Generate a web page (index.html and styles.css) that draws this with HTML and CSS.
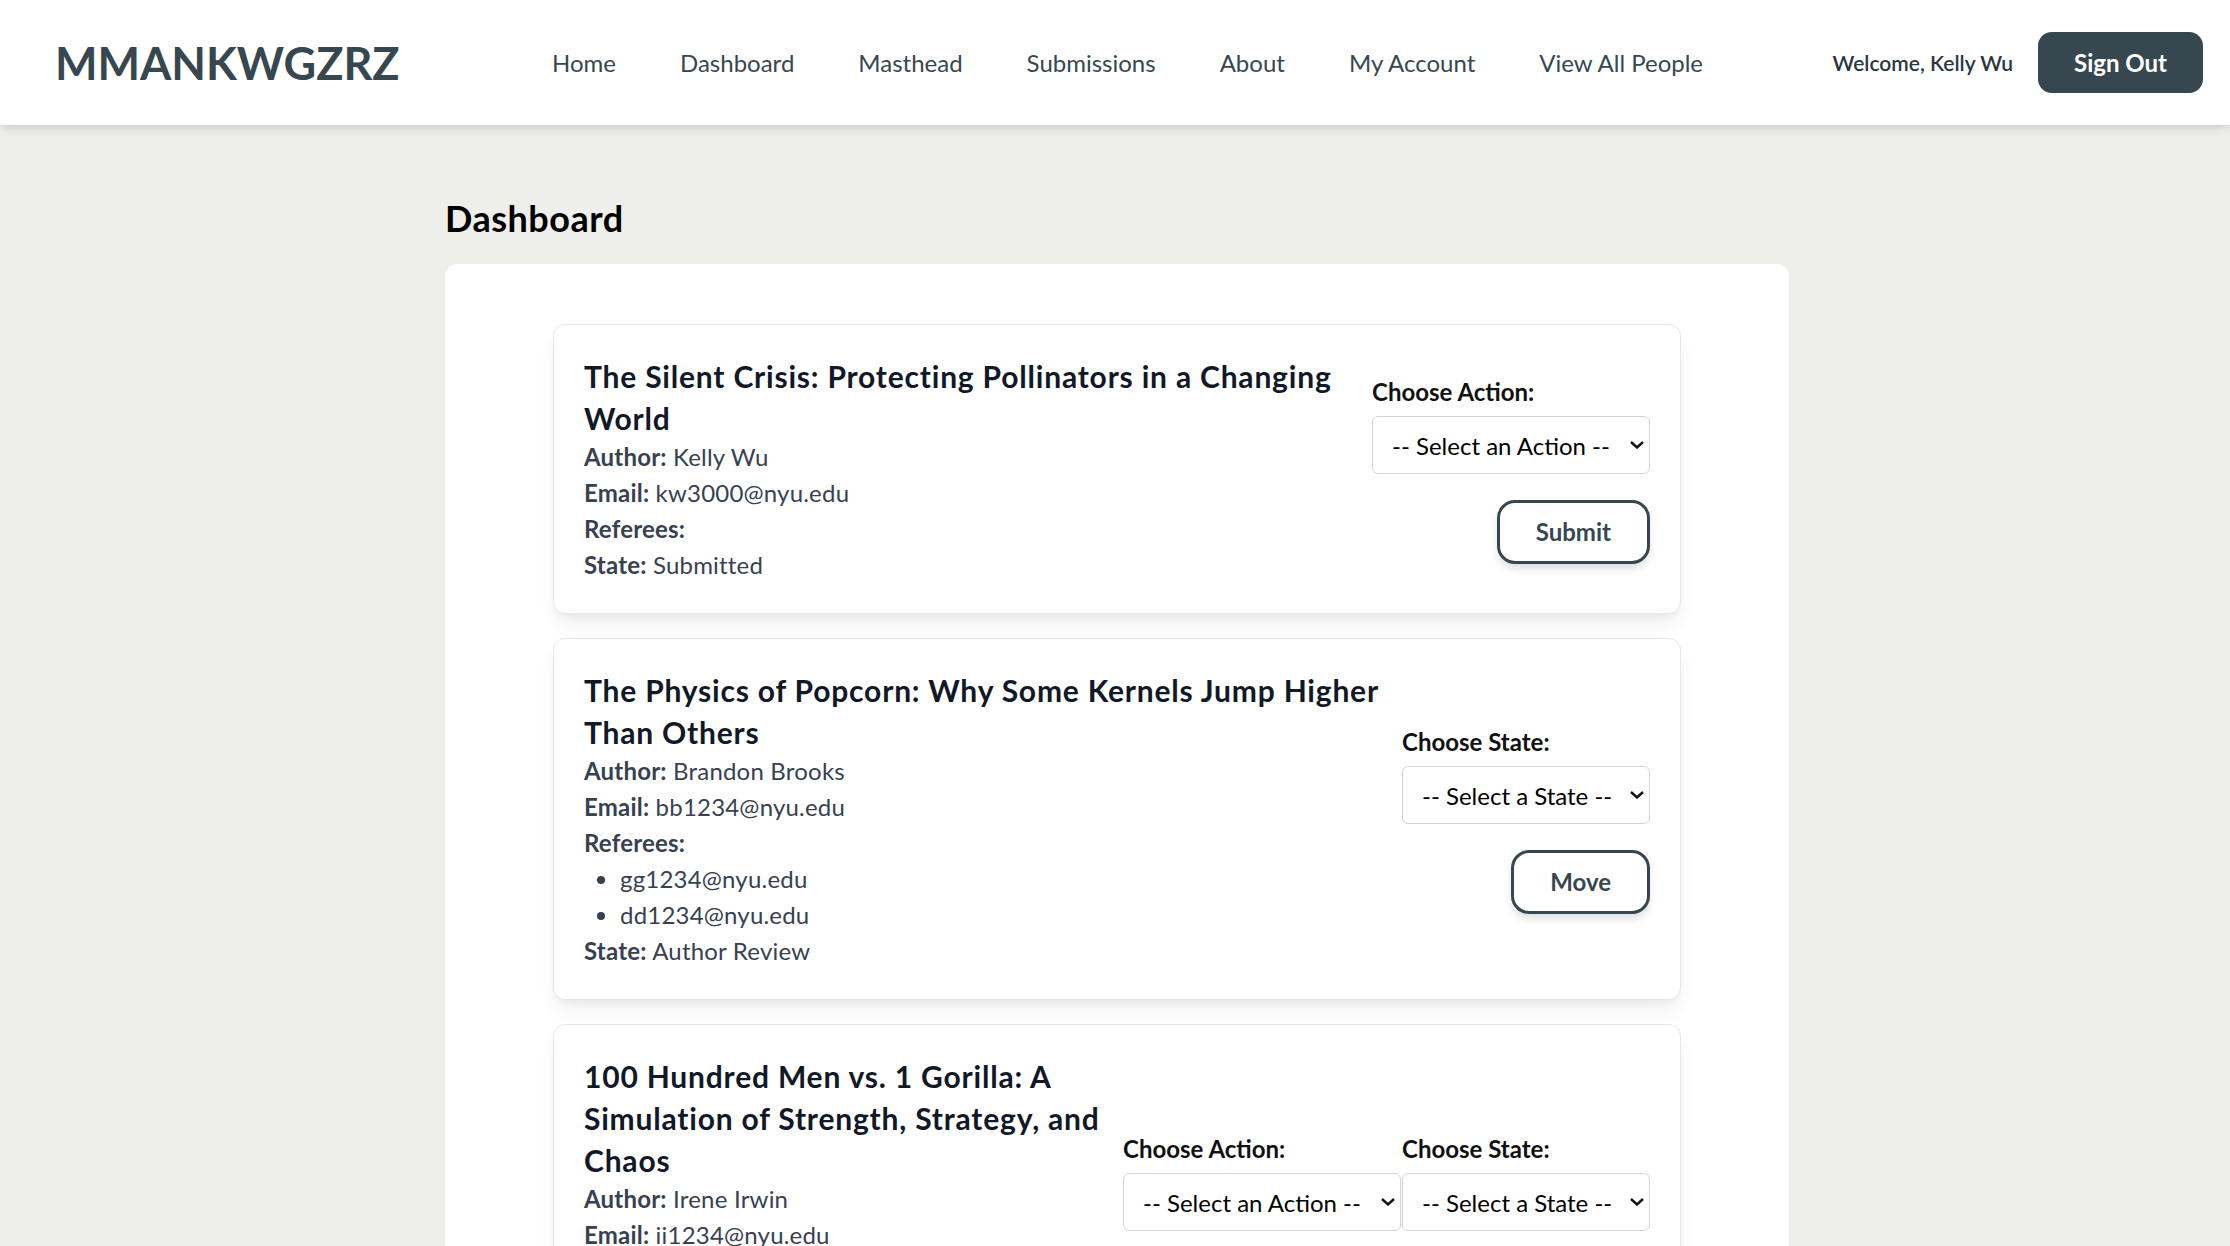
FILE: index.html
```html
<!DOCTYPE html>
<html lang="en">
<head>
<meta charset="utf-8">
<title>Dashboard - MMANKWGZRZ</title>
<link rel="stylesheet" href="styles.css">
</head>
<body>
<header class="site-header">
  <a class="logo" href="#">MMANKWGZRZ</a>
  <nav class="nav">
    <a href="#">Home</a>
    <a href="#">Dashboard</a>
    <a href="#">Masthead</a>
    <a href="#">Submissions</a>
    <a href="#">About</a>
    <a href="#">My Account</a>
    <a href="#">View All People</a>
  </nav>
  <div class="user">
    <span class="welcome">Welcome, Kelly Wu</span>
    <button class="signout">Sign Out</button>
  </div>
</header>

<main class="main">
  <h1 class="page-title">Dashboard</h1>
  <section class="panel">

    <article class="card">
      <div class="info">
        <h3 class="title">The Silent Crisis: Protecting Pollinators in a Changing World</h3>
        <p><strong>Author:</strong> Kelly Wu</p>
        <p><strong>Email:</strong> kw3000@nyu.edu</p>
        <p><strong>Referees:</strong></p>
        <p><strong>State:</strong> Submitted</p>
      </div>
      <div class="controls">
        <div class="group">
          <label class="ctl-label">Choose Action:</label>
          <div class="select-wrap">
            <select class="select select-action"><option>-- Select an Action --</option></select>
            <svg class="chev" viewBox="0 0 14 8" width="14" height="8"><path d="M1 1l6 5.5L13 1" fill="none" stroke="#111" stroke-width="2.4"/></svg>
          </div>
          <button class="btn">Submit</button>
        </div>
      </div>
    </article>

    <article class="card">
      <div class="info">
        <h3 class="title">The Physics of Popcorn: Why Some Kernels Jump Higher Than Others</h3>
        <p><strong>Author:</strong> Brandon Brooks</p>
        <p><strong>Email:</strong> bb1234@nyu.edu</p>
        <p><strong>Referees:</strong></p>
        <ul class="refs">
          <li>gg1234@nyu.edu</li>
          <li>dd1234@nyu.edu</li>
        </ul>
        <p><strong>State:</strong> Author Review</p>
      </div>
      <div class="controls">
        <div class="group">
          <label class="ctl-label">Choose State:</label>
          <div class="select-wrap">
            <select class="select select-state"><option>-- Select a State --</option></select>
            <svg class="chev" viewBox="0 0 14 8" width="14" height="8"><path d="M1 1l6 5.5L13 1" fill="none" stroke="#111" stroke-width="2.4"/></svg>
          </div>
          <button class="btn">Move</button>
        </div>
      </div>
    </article>

    <article class="card">
      <div class="info">
        <h3 class="title">100 Hundred Men vs. 1 Gorilla: A Simulation of Strength, Strategy, and Chaos</h3>
        <p><strong>Author:</strong> Irene Irwin</p>
        <p><strong>Email:</strong> ii1234@nyu.edu</p>
        <p><strong>Referees:</strong></p>
        <ul class="refs">
          <li>gg1234@nyu.edu</li>
          <li>dd1234@nyu.edu</li>
        </ul>
        <p><strong>State:</strong> Referee Review</p>
      </div>
      <div class="controls dual">
        <div class="group">
          <label class="ctl-label">Choose Action:</label>
          <div class="select-wrap">
            <select class="select select-action"><option>-- Select an Action --</option></select>
            <svg class="chev" viewBox="0 0 14 8" width="14" height="8"><path d="M1 1l6 5.5L13 1" fill="none" stroke="#111" stroke-width="2.4"/></svg>
          </div>
          <button class="btn">Submit</button>
        </div>
        <div class="group">
          <label class="ctl-label">Choose State:</label>
          <div class="select-wrap">
            <select class="select select-state"><option>-- Select a State --</option></select>
            <svg class="chev" viewBox="0 0 14 8" width="14" height="8"><path d="M1 1l6 5.5L13 1" fill="none" stroke="#111" stroke-width="2.4"/></svg>
          </div>
          <button class="btn">Move</button>
        </div>
      </div>
    </article>

  </section>
</main>
</body>
</html>
```
FILE: styles.css
```css
* { box-sizing: border-box; }

html, body {
  margin: 0;
  padding: 0;
}

body {
  background: #eeeeea;
  font-family: Lato, "Open Sans", "Noto Sans", sans-serif;
  color: #111827;
}

.site-header {
  height: 125px;
  background: #ffffff;
  display: flex;
  align-items: center;
  padding: 0 27px 0 55px;
  box-shadow: 0 6px 10px -2px rgba(0, 0, 0, 0.10), 0 3px 6px -2px rgba(0, 0, 0, 0.06);
  position: relative;
  z-index: 2;
}

.logo {
  width: 342px;
  font-size: 45px;
  font-weight: 700;
  color: #37474f;
  text-decoration: none;
  white-space: nowrap;
}

.nav {
  margin-left: 155px;
  display: flex;
  gap: 64px;
}

.nav a {
  font-size: 24px;
  color: #37474f;
  text-decoration: none;
  white-space: nowrap;
}

.user {
  margin-left: auto;
  display: flex;
  align-items: center;
  gap: 25px;
}

.welcome {
  font-size: 21px;
  font-weight: 600;
  color: #2b3640;
}

.signout {
  background: #37474f;
  color: #ffffff;
  border: none;
  border-radius: 14px;
  font-family: inherit;
  font-size: 24px;
  font-weight: 700;
  line-height: 37px;
  padding: 12px 36px;
  cursor: pointer;
}

.main {
  max-width: 1348px;
  margin: 0 auto;
  padding: 69px 0 0 4px;
}

.page-title {
  font-size: 36px;
  line-height: 48px;
  font-weight: 700;
  color: #000000;
  letter-spacing: 0.5px;
  margin: 0 0 22px 0;
}

.panel {
  background: #ffffff;
  border-radius: 12px;
  padding: 60px 108px 40px;
}

.card {
  display: flex;
  align-items: center;
  gap: 14px;
  padding: 30px;
  border: 1px solid #e5e7eb;
  border-radius: 12px;
  background: #ffffff;
  box-shadow: 0 12px 20px -4px rgba(0, 0, 0, 0.08), 0 5px 9px -3px rgba(0, 0, 0, 0.04);
  margin-bottom: 24px;
}

.info {
  flex: 1;
  min-width: 0;
}

.title {
  font-size: 30px;
  line-height: 42px;
  font-weight: 700;
  color: #111827;
  letter-spacing: 0.8px;
  margin: 0;
}

.info p {
  margin: 0;
  font-size: 24px;
  line-height: 36px;
  letter-spacing: 0.2px;
  color: #374151;
}

.info strong {
  font-weight: 700;
}

.refs {
  margin: 0;
  padding-left: 36px;
  font-size: 24px;
  line-height: 36px;
  letter-spacing: 0.2px;
  color: #374151;
}

.controls {
  display: flex;
  flex-direction: column;
}

.controls.dual {
  flex-direction: row;
  gap: 1px;
}

.group {
  display: flex;
  flex-direction: column;
  align-items: flex-start;
}

.ctl-label {
  display: block;
  font-size: 24px;
  line-height: 36px;
  font-weight: 700;
  color: #111111;
  margin-bottom: 6px;
}

.select-wrap {
  position: relative;
}

.select {
  appearance: none;
  -webkit-appearance: none;
  height: 58px;
  border: 1.5px solid #d4d4d8;
  border-radius: 6px;
  background: #ffffff;
  font-family: inherit;
  font-size: 24px;
  color: #000000;
  padding: 0 36px 0 19px;
  display: block;
}

.select-action { width: 278px; }
.select-state { width: 248px; }

.chev {
  position: absolute;
  right: 6px;
  top: 25px;
  pointer-events: none;
}

.btn {
  align-self: flex-end;
  margin-top: 26px;
  background: #ffffff;
  color: #37474f;
  border: 3px solid #37474f;
  border-radius: 18px;
  font-family: inherit;
  font-size: 24px;
  line-height: 36px;
  font-weight: 700;
  padding: 11px 36px;
  box-shadow: 0 6px 10px -2px rgba(0, 0, 0, 0.15);
  cursor: pointer;
}
```
